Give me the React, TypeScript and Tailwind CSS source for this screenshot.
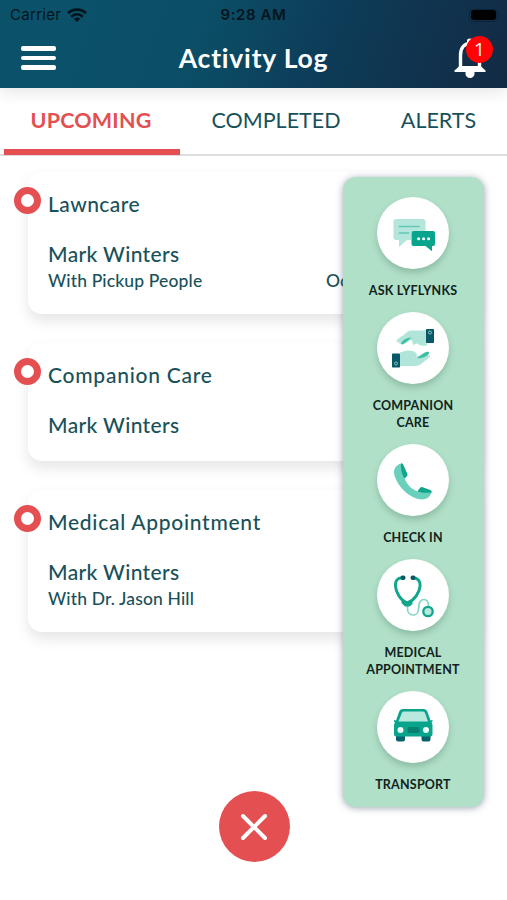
import type { ReactNode } from 'react';

const AskIcon = () => (
  <svg viewBox="0 0 72 72" className="h-[72px] w-[72px]">
    <path d="M19 22h27q2.500 0 2.500 2.500V34H37q-3 0-3 3v6h-4l-8 7v-7h-3q-2.500 0-2.500-2.500v-16q0-2.500 2.500-2.500z" fill="#b5e6dc" />
    <path d="M22.500 29.500h19.500M22.500 36h9" stroke="#62c8b5" strokeWidth="1.700" strokeLinecap="round" />
    <path d="M36.500 34h19.500q2 0 2 2v11q0 2-2 2h-1v5.200L48.500 49h-12q-2 0-2-2V36q0-2 2-2z" fill="#08a58c" />
    <circle cx="41.600" cy="41.700" r="1.500" fill="#fff" />
    <circle cx="46.600" cy="41.700" r="1.500" fill="#fff" />
    <circle cx="51.600" cy="41.700" r="1.500" fill="#fff" />
  </svg>
);

const HandsIcon = () => (
  <svg viewBox="0 0 72 72" className="h-[72px] w-[72px]">
    <path d="M50 18.500H34c-3 0-5 3-8 5-3 1.500-7 4.500-6.500 6 .4 1 2 .8 3 .2-1 1.500.2 2.700 1.700 1.900 0 1.300 1.600 1.400 2.800.5L34 28c2.500 1 1 2.800 2 4.500 1 .8 2 .3 2-.5l2-.5c3 2.500 6 2.500 10 2z" fill="#b1e5da" />
    <path d="M24 32c1-3 4-6 11-6.500-2.500 1-5 4.500-8 6-1.200.8-2.400 1-3 .5z" fill="#3dbda4" />
    <rect x="49" y="17" width="8" height="14" rx=".7" fill="#0a5968" />
    <circle cx="53" cy="20.500" r="1.500" fill="none" stroke="#8bc8c6" strokeWidth="1" />
    <path d="M23 40.500l5-1.500c4-1 8.500-.5 11 2 1.500 1.500 1 3 0 4l9-4.500c3-1 5 .5 3 2.800 2-.5 3 .5 1.500 2L44 52c-2 1.500-4 2-7 2H23z" fill="#b1e5da" />
    <path d="M40 46l8-5.500c2-1.200 4.500-.7 4 .5-.5 2-3.500 3.500-6 4.500-2 .8-4 1-6 .5z" fill="#3dbda4" />
    <rect x="15" y="41.500" width="8" height="14" rx=".7" fill="#0a5968" />
    <circle cx="19" cy="51.500" r="1.500" fill="none" stroke="#8bc8c6" strokeWidth="1" />
  </svg>
);

const PhoneIcon = () => (
  <svg viewBox="0 0 72 72" className="h-[72px] w-[72px]">
    <path d="M24 19.500C18 21.500 15.500 26 18 33c3.500 9.500 12 18.500 22 21.700 7 2 12.500-.2 14.500-6.200.5-1.300-.3-2.200-1.500-2.500l-7-2.500c-1.500-.5-2.500 0-3.500 1.200l-2 2.800c-7-3-10-7-13-13l2-2c1-.8 1-1.700.7-2.800l-4-9c-.5-1-1.200-1.500-2.200-1.200z" fill="#69d0bc" />
    <path d="M24 19.500c1-.3 1.700.2 2.200 1.200l4 9c.4 1.300.2 2-.7 2.800l-2 2c-3-5-4-10-3.500-15z" fill="#11a58b" />
    <path d="M40.500 47.500l2-2.800c1-1.200 2-1.700 3.500-1.200l7 2.500c1.200.4 2 1.300 1.500 2.500-5 .6-10 .2-14-1z" fill="#11a58b" />
  </svg>
);

const StethoscopeIcon = () => (
  <svg viewBox="0 0 72 72" className="h-[72px] w-[72px]" fill="none">
    <path d="M30.500 45v4.500c0 8.500 10.500 8.500 11 1 .2-4 .5-10 5.500-10 4 0 4.500 4 4.500 7" stroke="#86d7c8" strokeWidth="1.700" />
    <path d="M25 18.800c-4.500 0-6.800 3-6.600 8 .3 6.500 5 14.500 12 17.200 7-2.700 12.400-10.700 12.700-17.200.2-5-2.300-8-7-8" stroke="#12a68c" strokeWidth="3" />
    <path d="M24.500 41q6 3 11 0v4l-3 2.500h-4.500L24.500 44z" fill="#12a68c" />
    <rect x="23.500" y="16.500" width="5" height="4.500" rx="2" fill="#0a5968" />
    <rect x="33.500" y="16.500" width="5" height="4.500" rx="2" fill="#0a5968" />
    <circle cx="51" cy="52.500" r="4.700" fill="#b8e9df" stroke="#12a68c" strokeWidth="2.300" />
  </svg>
);

const CarIcon = () => (
  <svg viewBox="0 0 72 72" className="h-[72px] w-[72px]">
    <path d="M19 43h9v5.500q0 2-2 2h-5q-2 0-2-2zM44.500 43h9v5.500q0 2-2 2h-5q-2 0-2-2z" fill="#07636b" />
    <path d="M26 18h20.500q3 0 4 3l3 8.500 1.500-.5q1 .3.500 1.500l-1 1q1 1.200 1 3v8.500q0 2.500-2.500 2.500H19.500Q17 45.500 17 43v-8.500q0-1.800 1-3l-1-1q-.5-1.200.5-1.500l1.500.5 3-8.500q1-3 4-3z" fill="#08a58c" />
    <path d="M26.500 20.500H46q1.500 0 2 1.500l3 8.500H21.500L24.800 22q.5-1.500 1.700-1.500z" fill="#b9e8df" />
    <rect x="30.500" y="36" width="12" height="6" rx="1.500" fill="#078072" />
    <circle cx="23.500" cy="39" r="3" fill="#f1fffb" />
    <circle cx="49" cy="39" r="3" fill="#f1fffb" />
  </svg>
);

const WifiIcon = () => (
  <svg viewBox="0 0 20 15" className="h-[15px] w-5" fill="none" stroke="#04141c" strokeWidth="2.600">
    <path d="M1 5.300C6 .4 14 .4 19 5.300M4.200 8.700c3.400-3.200 8.200-3.200 11.600 0" />
    <path d="M10 14L6.800 10.800c1.800-1.600 4.600-1.600 6.400 0z" fill="#04141c" stroke="none" />
  </svg>
);

const BellIcon = () => (
  <svg viewBox="0 0 34 42" className="h-[42px] w-[34px]" fill="none">
    <path d="M7.500 32V18.500c0-7 3.500-12 9.500-12s9.500 5 9.500 12V32" stroke="#fff" strokeWidth="3.400" />
    <path d="M14 6V3.500q0-2 3-2t3 2V6z" fill="#fff" />
    <path d="M1.500 35v-1.500l5-4.500h21l5 4.500V35z" fill="#fff" />
    <path d="M12.500 35h9v2a4.500 4 0 0 1-9 0z" fill="#fff" />
  </svg>
);

function Ring() {
  return <span className="absolute -left-3.5 top-[15px] h-[27px] w-[27px] rounded-full border-[7px] border-[#e44f52] bg-white" />;
}

function Card({ title, children, className }: { title: ReactNode; children: ReactNode; className: string }) {
  return (
    <article className={`relative rounded-[14px] bg-white pl-5 pt-[17px] text-[21px] leading-[30px] shadow-[0_7px_14px_rgba(0,0,0,0.1)] ${className}`}>
      <Ring />
      <h2>{title}</h2>
      <div className="pt-5">{children}</div>
    </article>
  );
}

function Action({ icon, children }: { icon: ReactNode; children: ReactNode }) {
  return (
    <button className="flex w-full flex-col items-center">
      <span className="h-[72px] w-[72px] rounded-full bg-white shadow-[0_4px_6px_rgba(40,85,65,0.25)]">{icon}</span>
      <span className="pt-[13px] text-center text-[12.5px] font-bold leading-[17.5px] tracking-[0.2px] text-[#10231d]">{children}</span>
    </button>
  );
}

export default function App() {
  return (
    <main className="relative h-[900px] w-[507px] overflow-hidden bg-white font-[Lato,sans-serif] font-medium text-[#19515a]">
      <header className="relative h-[88px] bg-[linear-gradient(110deg,#0a526a_0%,#0b4f67_38%,#0d3c58_64%,#132a44_100%)] shadow-[0_4px_15px_rgba(0,0,0,0.1)]">
        <div className="grid h-[30px] grid-cols-3 items-center font-[Inter,sans-serif] text-[15px] text-[#04141c]">
          <div className="flex items-center gap-1.5 pl-2.5 font-normal"><span className="tracking-[0.3px]">Carrier</span><WifiIcon /></div>
          <div className="text-center text-[15px] font-semibold tracking-[0.6px]">9:28 AM</div>
          <div className="flex justify-end pr-[9px]"><span className="flex h-[13px] w-[29px] items-center justify-center rounded-[4px] border border-[#0b2336]"><span className="h-[10px] w-[25px] rounded-[3px] bg-black" /></span></div>
        </div>
        <div className="grid h-[56px] grid-cols-[80px_1fr_80px] items-center">
          <div className="flex flex-col gap-[5px] pl-[21px]">
            <span className="h-[4.500px] w-[35px] rounded-[2px] bg-white" />
            <span className="h-[4.500px] w-[35px] rounded-[2px] bg-white" />
            <span className="h-[4.500px] w-[35px] rounded-[2px] bg-white" />
          </div>
          <h1 className="text-center text-[26.5px] font-bold leading-[40px] tracking-[0.8px] text-white"><span>Activity Log</span></h1>
          <div className="relative pl-[26px]">
            <BellIcon />
            <span className="absolute left-[39px] top-[-1px] flex h-[27px] w-[27px] items-center justify-center rounded-full bg-[#ff0305] font-['Open_Sans',sans-serif] text-[19px] font-normal leading-none text-white">1</span>
          </div>
        </div>
      </header>
      <nav className="grid h-[68px] grid-cols-[184px_184px_139px] border-b-2 border-[#dedede] text-center text-[21.5px] leading-[64px]">
        <div className="relative pr-0.5 font-bold text-[#e44f52]">
          <span className="tracking-[0.2px]">UPCOMING</span>
          <span className="absolute -bottom-px left-1 h-[6px] w-[176px] bg-[#e44f52]" />
        </div>
        <div className="font-normal"><span>COMPLETED</span></div>
        <div className="pl-0.5 font-normal"><span>ALERTS</span></div>
      </nav>
      <section className="flex flex-col gap-[29px] pl-7 pr-7 pt-4">
        <Card className="h-[142px]" title={<span className="tracking-[0.45px]">Lawncare</span>}>
          <p><span className="tracking-[0.35px]">Mark Winters</span></p>
          <p className="flex text-[17.500px] leading-6"><span className="w-[278px] tracking-[0.14px]">With Pickup People</span><span>Oc</span></p>
        </Card>
        <Card className="h-[118px]" title={<span className="tracking-[0.75px]">Companion Care</span>}>
          <p><span className="tracking-[0.35px]">Mark Winters</span></p>
        </Card>
        <Card className="h-[142px]" title={<span className="tracking-[0.72px]">Medical Appointment</span>}>
          <p><span className="tracking-[0.35px]">Mark Winters</span></p>
          <p className="text-[17.500px] leading-6"><span className="tracking-[0.14px]">With Dr. Jason Hill</span></p>
        </Card>
      </section>
      <aside className="absolute left-[343px] top-[177px] flex h-[630px] w-[141px] flex-col gap-[12.300px] rounded-[13px] bg-[#b1e0c8] pr-px pt-5 shadow-[0_1px_7px_rgba(65,80,110,0.5)]">
        <Action icon={<AskIcon />}><span>ASK LYFLYNKS</span></Action>
        <Action icon={<HandsIcon />}><span>COMPANION</span><br /><span>CARE</span></Action>
        <Action icon={<PhoneIcon />}><span>CHECK IN</span></Action>
        <Action icon={<StethoscopeIcon />}><span>MEDICAL</span><br /><span>APPOINTMENT</span></Action>
        <Action icon={<CarIcon />}><span>TRANSPORT</span></Action>
      </aside>
      <button aria-label="Close" className="absolute left-[219px] top-[791px] flex h-[71px] w-[71px] items-center justify-center rounded-full bg-[#e44f52] pr-px">
        <svg viewBox="0 0 28 28" className="h-7 w-7" stroke="#fff" strokeWidth="4" strokeLinecap="round"><path d="M3 3l22 22M25 3L3 25" /></svg>
      </button>
    </main>
  );
}
